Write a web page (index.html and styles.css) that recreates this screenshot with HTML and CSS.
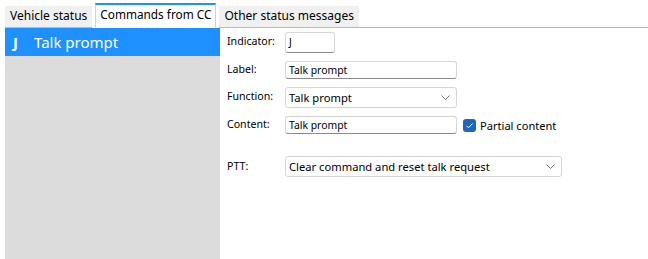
FILE: index.html
```html
<!DOCTYPE html>
<html lang="en">

<head>
  <meta charset="utf-8" />
  <title>Commands from CC</title>
  <link rel="stylesheet" href="styles.css">
</head>

<body>
  <div class="tabs">
    <div class="tab">Vehicle status</div>
    <div class="tab tab-active">Commands from CC</div>
    <div class="tab">Other status messages</div>
    <div class="tabs-rest"></div>
  </div>
  <div class="main">
    <div class="list">
      <div class="list-item list-item-selected">
        <span class="list-key">J</span>
        <span class="list-name">Talk prompt</span>
      </div>
    </div>
    <div class="form">
      <div class="form-label">Indicator:</div>
      <div class="field"><div class="input input-short">J</div></div>

      <div class="form-label">Label:</div>
      <div class="field"><div class="input">Talk prompt</div></div>

      <div class="form-label">Function:</div>
      <div class="field">
        <div class="select">
          <span>Talk prompt</span>
          <svg class="chevron" width="9" height="5" viewBox="0 0 9 5"><path d="M0.5 0.5 4.5 4.5 8.5 0.5" fill="none" stroke="#707070" stroke-width="1" /></svg>
        </div>
      </div>

      <div class="form-label">Content:</div>
      <div class="field">
        <div class="input">Talk prompt</div>
        <div class="checkbox">
          <svg width="13" height="13" viewBox="0 0 13 13"><rect x="0" y="0" width="13" height="13" rx="3" fill="#1d65bd" /><path d="M3.5 6.8 5.5 8.8 9.6 4.4" fill="none" stroke="#fff" stroke-width="1" /></svg>
          <span>Partial content</span>
        </div>
      </div>

      <div class="form-label label-ptt">PTT:</div>
      <div class="field field-ptt">
        <div class="select select-wide">
          <span>Clear command and reset talk request</span>
          <svg class="chevron" width="9" height="5" viewBox="0 0 9 5"><path d="M0.5 0.5 4.5 4.5 8.5 0.5" fill="none" stroke="#707070" stroke-width="1" /></svg>
        </div>
      </div>
    </div>
  </div>
</body>

</html>
```

FILE: styles.css
```css
:root {
  --blue: #1e90ff;
  --line: #b9b9b9;
  --field-border: #d6d6d6;
}

html,
body {
  margin: 0;
  height: 100%;
  background: #fff;
}

body {
  width: 648px;
  height: 259px;
  overflow: hidden;
  font-family: "Noto Sans", "DejaVu Sans", sans-serif;
  font-size: 12px;
  color: #000;
}

/* tab strip */

.tabs {
  display: flex;
  align-items: flex-end;
  height: 28px;
  padding-left: 5px;
}

.tab {
  height: 22px;
  line-height: 20px;
  padding: 0 5px;
  background: #f0f0f0;
  border-bottom: 1px solid var(--line);
  box-sizing: border-box;
  white-space: nowrap;
}

.tab + .tab {
  margin-left: 3px;
}

.tab-active {
  height: 25px;
  line-height: 19px;
  background: #fff;
  border: 1px solid #d0d0d0;
  border-top: 2px solid var(--blue);
  border-bottom: 1px solid #fff;
  padding: 0 4px;
  font-size: 11.8px;
}

.tabs-rest {
  flex: 1;
  height: 1px;
  background: var(--line);
}

/* left list */

.main {
  display: flex;
  height: 231px;
}

.list {
  width: 215px;
  margin-left: 5px;
  background: #dcdcdc;
}

.list-item {
  display: flex;
  align-items: center;
  height: 28px;
  font-size: 15px;
  padding-left: 8px;
}

.list-item-selected {
  background: var(--blue);
  color: #fff;
}

.list-key {
  width: 21px;
  font-weight: bold;
}

/* form */

.form {
  display: grid;
  grid-template-columns: 58px auto;
  grid-template-rows: 21px 18px 21px 18px 35px;
  row-gap: 8px;
  padding: 4px 0 0 7px;
  align-content: start;
  align-items: center;
}

.form-label {
  margin-top: -3px;
  font-size: 10.6px;
}

.field {
  display: flex;
  align-items: center;
}

.field-ptt,
.label-ptt {
  align-self: end;
}

.label-ptt {
  margin-bottom: 4px;
}

.input,
.select {
  box-sizing: border-box;
  background: #fff;
  border: 1px solid var(--field-border);
  border-bottom-color: #8a8a8a;
  border-radius: 3px;
  padding-left: 3px;
  white-space: nowrap;
  width: 172px;
  height: 18px;
  line-height: 16px;
  font-size: 10.4px;
}

.input-short {
  width: 50px;
  height: 21px;
  line-height: 18px;
}

.select {
  display: flex;
  align-items: center;
  justify-content: space-between;
  height: 21px;
  border-bottom-color: var(--field-border);
  padding-right: 6px;
  font-size: 11.2px;
}

.select-wide {
  width: 277px;
}

.chevron {
  flex: none;
}

.checkbox {
  display: flex;
  align-items: center;
  gap: 4px;
  margin-left: 6px;
  font-size: 11.1px;
}

.checkbox svg {
  display: block;
}
```
